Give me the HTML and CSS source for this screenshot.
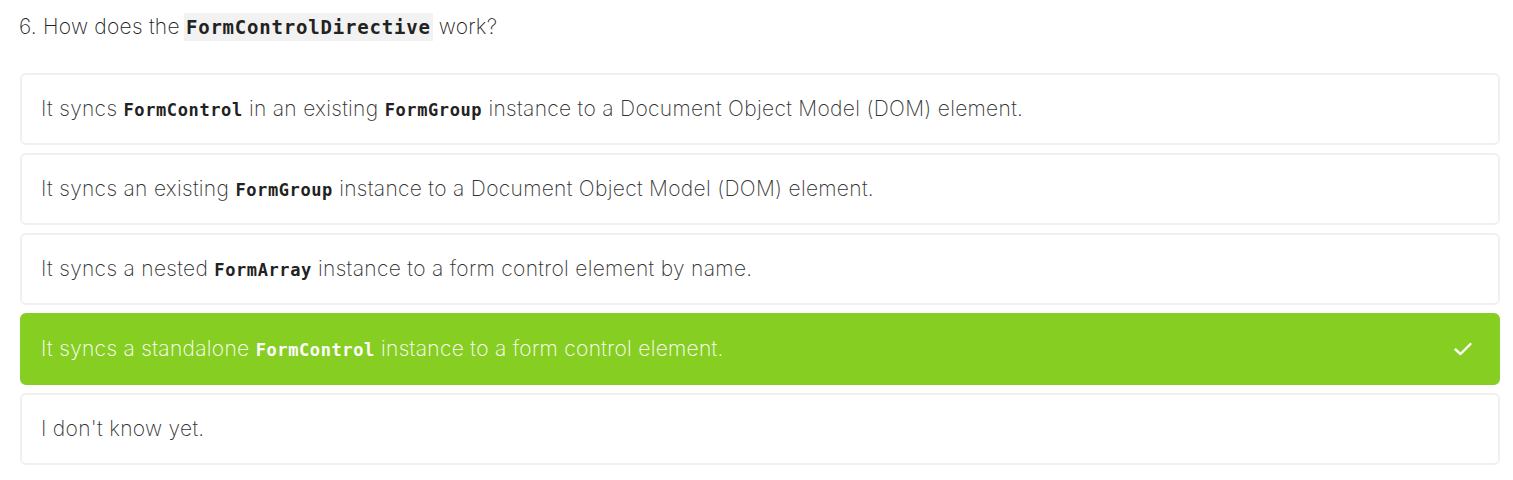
FILE: index.html
```html
<!DOCTYPE html>
<html>
<head>
<meta charset="utf-8">
<link rel="stylesheet" href="styles.css">
</head>
<body>
<div class="quiz">
  <h3 class="question">6. How does the <code class="qcode">FormControlDirective</code> work?</h3>
  <ul class="answers">
    <li class="answer"><span class="label">It syncs <code>FormControl</code> in an existing <code>FormGroup</code> instance to a Document Object Model (DOM) element.</span></li>
    <li class="answer"><span class="label">It syncs an existing <code>FormGroup</code> instance to a Document Object Model (DOM) element.</span></li>
    <li class="answer"><span class="label">It syncs a nested <code>FormArray</code> instance to a form control element by name.</span></li>
    <li class="answer correct"><span class="label">It syncs a standalone <code>FormControl</code> instance to a form control element.</span>
      <svg class="check" width="20" height="16" viewBox="0 0 20 16"><path d="M2.5 8.5 L7.5 13 L17.5 3" fill="none" stroke="#fff" stroke-width="2.4" stroke-linecap="round" stroke-linejoin="round"/></svg>
    </li>
    <li class="answer"><span class="label">I don't know yet.</span></li>
  </ul>
</div>
</body>
</html>
```
FILE: styles.css
```css
html, body { margin: 0; padding: 0; background: #fff; }
body { font-family: "Inter", "Liberation Sans", sans-serif; font-weight: 200; color: #333; }
.quiz { padding: 0 13px 0 20px; }
.question { margin: 0 0 0 -1px; padding-top: 12px; font-size: 21px; font-weight: 200; line-height: 30px; color: #222; letter-spacing: 0.25px; }
code { font-family: "DejaVu Sans Mono", "Liberation Mono", monospace; font-weight: 700; font-size: 17px; letter-spacing: 0.6px; color: #222; }
.qcode { background: #f2f2f2; font-size: 19px; letter-spacing: 0.8px; padding: 3px 2px; margin-left: -2px; }
.answers { list-style: none; margin: 31px 0 0; padding: 0; display: flex; flex-direction: column; gap: 8px; }
.answer { box-sizing: border-box; height: 72px; border: 2px solid #f0f0f0; border-radius: 6px; padding: 0 19px 1px; display: flex; align-items: center; justify-content: space-between; font-size: 21px; color: #333; letter-spacing: 0.3px; }
.answer.correct { background: #87ce22; border-color: #87ce22; color: #fff; }
.answer.correct code { color: #fff; }
.check { margin-right: 6px; }
```
